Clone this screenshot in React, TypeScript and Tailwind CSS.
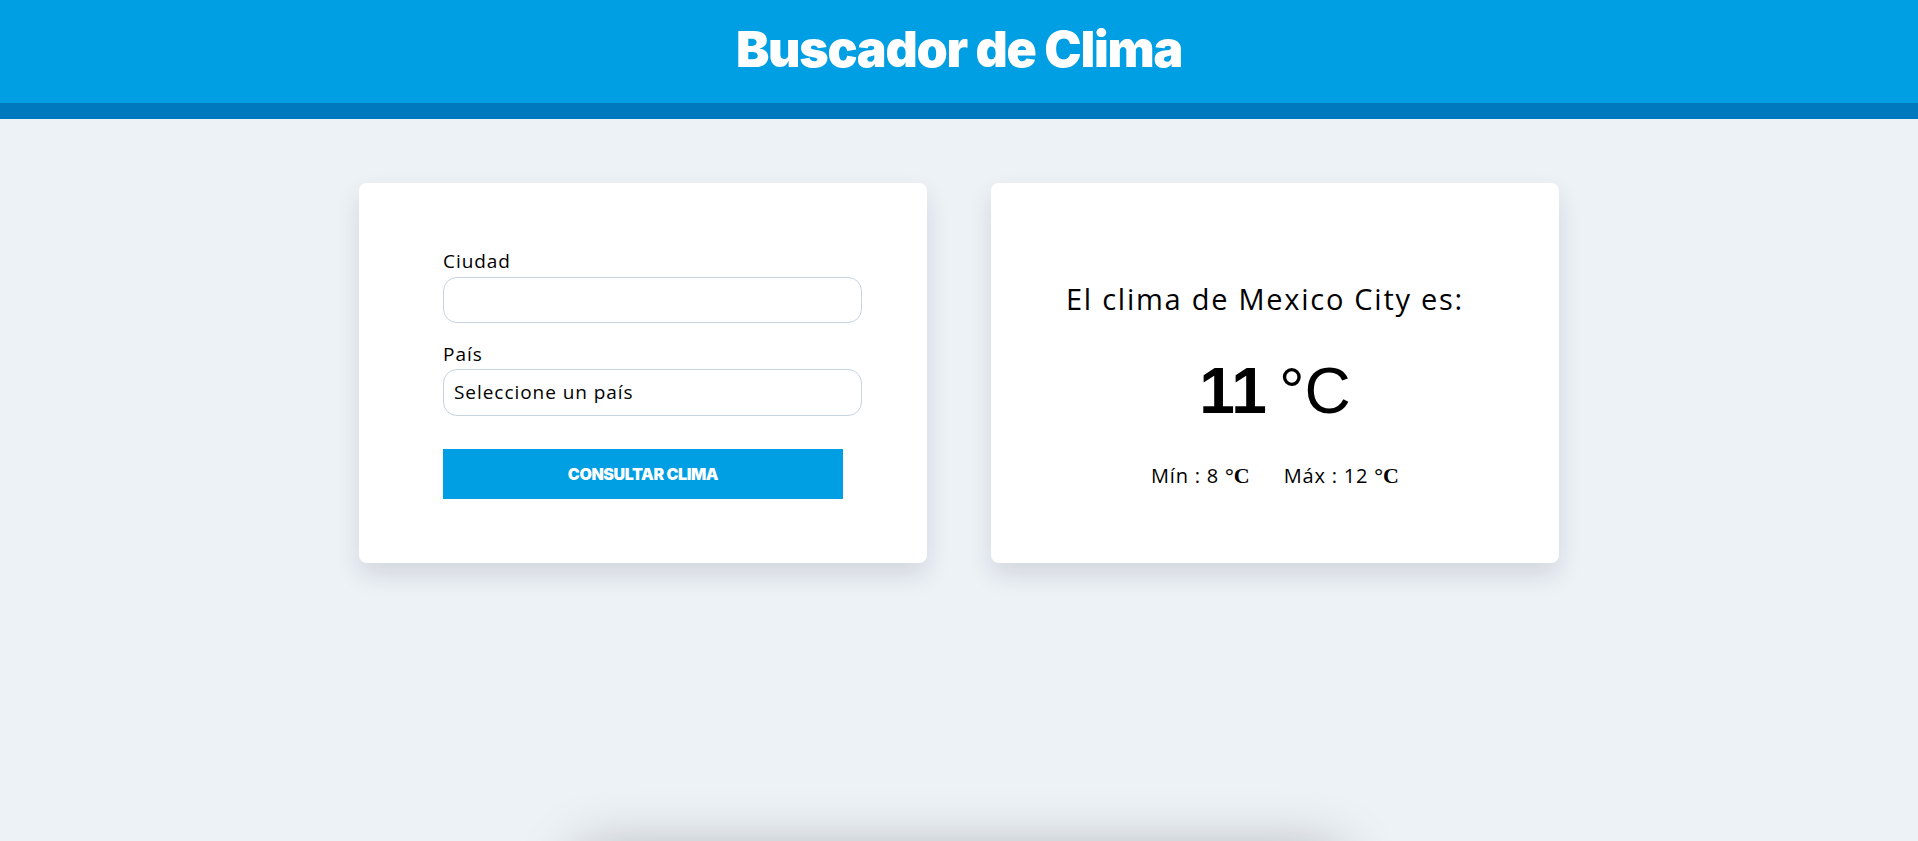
import React from "react";

const body = { fontFamily: '"Open Sans", "Noto Sans", sans-serif' };

const App = () => {
  const [ciudad, setCiudad] = React.useState("");
  const [pais, setPais] = React.useState("");

  return (
    <div className="min-h-screen bg-[#edf2f7] overflow-hidden" style={body}>
      <header className="bg-[#009ee2] border-b-[16px] border-[#0079bf] h-[119px] flex items-center justify-center">
        <h1 className="text-white text-[50px] font-black tracking-tight -mt-1" style={{ fontFamily: 'Inter, "Liberation Sans", sans-serif' }}>
          Buscador de Clima
        </h1>
      </header>

      <main className="w-[1200px] mx-auto pt-16 grid grid-cols-2 gap-16">
        <div className="bg-white rounded-lg shadow-[0_12px_24px_rgba(15,23,42,0.12)] h-[380px] pl-[84px] pr-[65px] pt-[66px]">
          <label className="block text-[19px] leading-6 text-black tracking-[0.05em]">Ciudad</label>
          <input
            value={ciudad}
            onChange={(e) => setCiudad(e.target.value)}
            className="mt-1 w-full h-[46px] rounded-[14px] border border-[#c5d3e3] px-3 outline-none"
          />
          <label className="block mt-[19px] text-[19px] leading-6 text-black tracking-[0.05em]">País</label>
          <div className="mt-[3px] w-full h-[47px] rounded-[14px] border border-[#c5d3e3] px-[10px] flex items-center">
            <select
              value={pais}
              onChange={(e) => setPais(e.target.value)}
              className="appearance-none w-full bg-transparent outline-none text-[19px] tracking-[0.05em] text-black"
            >
              <option value="">Seleccione un país</option>
              <option value="MX">México</option>
              <option value="AR">Argentina</option>
              <option value="CO">Colombia</option>
              <option value="ES">España</option>
            </select>
          </div>
          <button
            className="mt-[33px] w-[400px] h-[50px] bg-[#009ee2] text-white text-[16px] font-black uppercase tracking-tight"
            style={{ fontFamily: 'Inter, "Liberation Sans", sans-serif' }}
          >
            Consultar clima
          </button>
        </div>

        <div className="bg-white rounded-lg shadow-[0_12px_24px_rgba(15,23,42,0.12)] h-[380px] flex flex-col items-center pt-[98px]">
          <p className="text-[29px] leading-9 tracking-[0.06em] text-black -ml-5">El clima de Mexico City es:</p>
          <p className="mt-[42px] text-[64px] leading-none text-black" style={{ fontFamily: '"Liberation Sans", Arial, sans-serif' }}>
            <span className="font-black">11</span>
            <span className="ml-3">°C</span>
          </p>
          <div className="mt-[36px] flex gap-[34px] text-[20px] tracking-[0.04em] text-black">
            <p>
              Mín : 8 <span className="font-bold text-[22px] tracking-normal" style={{ fontFamily: '"Liberation Serif", serif' }}>°C</span>
            </p>
            <p>
              Máx : 12 <span className="font-bold text-[22px] tracking-normal" style={{ fontFamily: '"Liberation Serif", serif' }}>°C</span>
            </p>
          </div>
        </div>
      </main>

      <section className="w-[760px] h-[200px] mx-auto mt-[290px] bg-white rounded-lg shadow-[0_0_60px_rgba(0,0,0,0.3)]" />
    </div>
  );
};

export default App;
